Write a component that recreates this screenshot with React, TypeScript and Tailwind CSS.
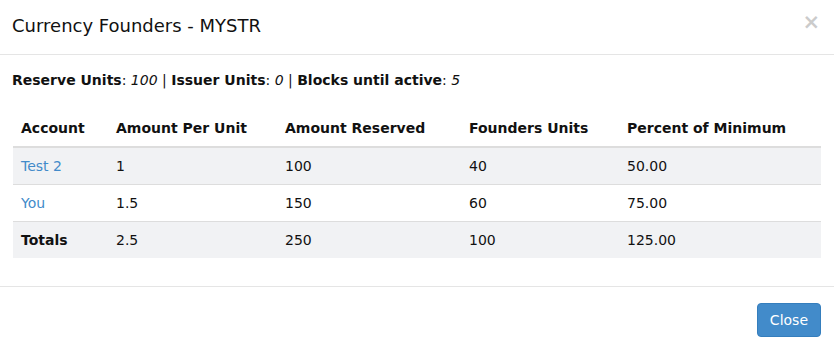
import React from "react";

type Row = {
  account: string;
  perUnit: string;
  reserved: string;
  units: string;
  percent: string;
  link?: boolean;
};

const rows: Row[] = [
  { account: "Test 2", perUnit: "1", reserved: "100", units: "40", percent: "50.00", link: true },
  { account: "You", perUnit: "1.5", reserved: "150", units: "60", percent: "75.00", link: true },
];

const totals: Row = { account: "Totals", perUnit: "2.5", reserved: "250", units: "100", percent: "125.00" };

const cell = "px-2 py-2 leading-5 text-left align-top border-t border-[#ddd]";

export default function App() {
  return (
    <div className="w-[834px] h-[351px] bg-white text-[14px] text-[#111] font-['DejaVu_Sans',sans-serif]">
      {/* header */}
      <div className="flex items-start justify-between border-b border-[#e5e5e5] pl-[12px] pr-[14px] pt-[13px] pb-[15px]">
        <h4 className="m-0 text-[18px] leading-[25.7px] font-normal">Currency Founders - MYSTR</h4>
        <button className="-mt-[1px] text-[21px] leading-none font-bold text-black opacity-20">×</button>
      </div>

      {/* body */}
      <div className="px-[13px] pt-[15px] pb-[15px]">
        <p className="leading-5 mb-[20px] -ml-px">
          <b>Reserve Units</b>: <i>100</i> | <b>Issuer Units</b>: <i>0</i> | <b>Blocks until active</b>:{" "}
          <i>5</i>
        </p>

        <table className="w-[808px] border-collapse mb-[13px]">
          <colgroup>
            <col className="w-[95px]" />
            <col className="w-[169px]" />
            <col className="w-[184px]" />
            <col className="w-[158px]" />
            <col className="w-[202px]" />
          </colgroup>
          <thead>
            <tr>
              {["Account", "Amount Per Unit", "Amount Reserved", "Founders Units", "Percent of Minimum"].map((h) => (
                <th key={h} className="px-2 py-2 leading-5 text-left align-bottom font-bold border-b-2 border-[#ddd]">
                  {h}
                </th>
              ))}
            </tr>
          </thead>
          <tbody>
            {rows.map((r, i) => (
              <tr key={r.account} className={i % 2 === 0 ? "bg-[#f1f2f4]" : "bg-white"}>
                <td className={cell}>
                  <a className="text-[#428bca]">{r.account}</a>
                </td>
                <td className={cell}>{r.perUnit}</td>
                <td className={cell}>{r.reserved}</td>
                <td className={cell}>{r.units}</td>
                <td className={cell}>{r.percent}</td>
              </tr>
            ))}
            <tr className="bg-[#f1f2f4]">
              <td className={cell + " font-bold"}>{totals.account}</td>
              <td className={cell}>{totals.perUnit}</td>
              <td className={cell}>{totals.reserved}</td>
              <td className={cell}>{totals.units}</td>
              <td className={cell}>{totals.percent}</td>
            </tr>
          </tbody>
        </table>
      </div>

      {/* footer */}
      <div className="flex justify-end border-t border-[#e5e5e5] px-[13px] pt-[16px] pb-[15px]">
        <button className="rounded-[4px] border border-[#357ebd] bg-[#428bca] px-3 py-[6px] leading-5 text-white">
          Close
        </button>
      </div>
    </div>
  );
}
